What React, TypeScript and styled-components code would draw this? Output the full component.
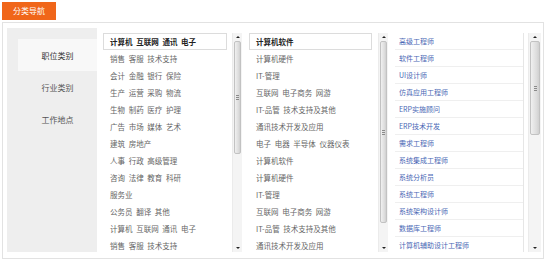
import styled, { createGlobalStyle } from "styled-components";

const Global = createGlobalStyle`
  html, body {
    margin: 0;
    padding: 0;
    background: #fff;
  }
`;

const Page = styled.div`
  padding: 2px;
  width: 543px;
  font-family: "Noto Sans CJK SC", "Noto Sans", sans-serif;
  font-size: 8px;
  color: #666;
`;

const Tab = styled.div`
  display: inline-block;
  height: 18px;
  line-height: 18px;
  padding: 0 11px;
  background: #f0661a;
  color: #fff;
  font-size: 8px;
  vertical-align: top;
`;

const Panel = styled.div`
  margin-top: 2px;
  border: 1px solid #e2e2e2;
  padding: 5px 0 6px 4px;
  width: 536px;
`;

const Inner = styled.div`
  display: flex;
  height: 224px;
`;

const Nav = styled.div`
  width: 90px;
  background: #eeeeee;
  padding-top: 11px;
  box-sizing: border-box;
`;

const NavItem = styled.div<{ active?: boolean }>`
  margin-left: 11px;
  height: 32px;
  display: flex;
  align-items: center;
  justify-content: center;
  font-size: 8px;
  color: ${(p) => (p.active ? "#333" : "#555")};
  background: ${(p) => (p.active ? "#f8f8f8" : "transparent")};
`;

const Column = styled.div<{ width: number; spacer: number }>`
  width: ${(p) => p.width}px;
  display: flex;
  padding: 5px ${(p) => p.spacer}px 0 0;
  box-sizing: border-box;
  background: #fff;
`;

const List = styled.div<{ padL: number; padR: number; divided?: boolean }>`
  flex: 1;
  overflow: hidden;
  padding: 0 ${(p) => p.padR}px 0 ${(p) => p.padL}px;
  border-right: ${(p) => (p.divided ? "1px solid #e6e6e6" : "none")};
  margin-right: ${(p) => (p.divided ? "4px" : "0")};
`;

const Row = styled.div<{ selected?: boolean }>`
  height: 17px;
  box-sizing: border-box;
  line-height: 15px;
  padding-left: 6px;
  font-size: 7.5px;
  border: 1px solid ${(p) => (p.selected ? "#dcdcdc" : "transparent")};
  background: ${(p) => (p.selected ? "#fff" : "transparent")};
  font-weight: ${(p) => (p.selected ? 700 : 400)};
  color: ${(p) => (p.selected ? "#222" : "#666")};
  white-space: nowrap;
  word-spacing: 2px;
`;

const LinkRow = styled.div`
  height: 17px;
  box-sizing: border-box;
  line-height: 16px;
  padding-left: 4px;
  font-size: 7px;
  border-bottom: 1px solid #efefef;
  color: #4a68b5;
  white-space: nowrap;
`;

const Bar = styled.div<{ width: number }>`
  width: ${(p) => p.width}px;
  height: 219px;
  display: flex;
  flex-direction: column;
  background: #f4f4f4;
  border-left: 1px solid #ebebeb;
  box-sizing: border-box;
`;

const Arrow = styled.div<{ down?: boolean }>`
  height: 8px;
  display: flex;
  align-items: center;
  justify-content: center;

  &::after {
    content: "";
    border-left: 2px solid transparent;
    border-right: 2px solid transparent;
    ${(p) =>
      p.down
        ? "border-top: 2px solid #222;"
        : "border-bottom: 2px solid #222;"}
  }
`;

const Track = styled.div`
  flex: 1;
  padding: 0 1px;
`;

const Thumb = styled.div<{ size: number }>`
  height: ${(p) => p.size}px;
  border: 1px solid #c2c2c2;
  border-radius: 2px;
  box-sizing: border-box;
  background: linear-gradient(to right, #f0f0f0, #dcdcdc 70%, #d0d0d0);
  display: flex;
  flex-direction: column;
  align-items: center;
  justify-content: center;
  gap: 1px;
`;

const Grip = styled.span`
  width: 3px;
  height: 1px;
  background: #8a8a8a;
`;

const ScrollBar = ({ width, thumb }: { width: number; thumb: number }) => (
  <Bar width={width}>
    <Arrow />
    <Track>
      <Thumb size={thumb}>
        <Grip />
        <Grip />
        <Grip />
      </Thumb>
    </Track>
    <Arrow down />
  </Bar>
);

const categories = [
  "计算机 互联网 通讯 电子",
  "销售 客服 技术支持",
  "会计 金融 银行 保险",
  "生产 运营 采购 物流",
  "生物 制药 医疗 护理",
  "广告 市场 媒体 艺术",
  "建筑 房地产",
  "人事 行政 高级管理",
  "咨询 法律 教育 科研",
  "服务业",
  "公务员 翻译 其他",
  "计算机 互联网 通讯 电子",
  "销售 客服 技术支持",
];

const subs = [
  "计算机软件",
  "计算机硬件",
  "IT-管理",
  "互联网 电子商务 网游",
  "IT-品管 技术支持及其他",
  "通讯技术开发及应用",
  "电子 电器 半导体 仪器仪表",
  "计算机软件",
  "计算机硬件",
  "IT-管理",
  "互联网 电子商务 网游",
  "IT-品管 技术支持及其他",
  "通讯技术开发及应用",
];

const jobs = [
  "高级工程师",
  "软件工程师",
  "UI设计师",
  "仿真应用工程师",
  "ERP实施顾问",
  "ERP技术开发",
  "需求工程师",
  "系统集成工程师",
  "系统分析员",
  "系统工程师",
  "系统架构设计师",
  "数据库工程师",
  "计算机辅助设计工程师",
];

export default function App() {
  return (
    <>
      <Global />
      <Page>
        <Tab>分类导航</Tab>
        <Panel>
          <Inner>
            <Nav>
              <NavItem active>职位类别</NavItem>
              <NavItem>行业类别</NavItem>
              <NavItem>工作地点</NavItem>
            </Nav>
            <Column width={146} spacer={1}>
              <List padL={6} padR={5}>
                {categories.map((c, i) => (
                  <Row key={i} selected={i === 0}>
                    {c}
                  </Row>
                ))}
              </List>
              <ScrollBar width={10} thumb={113} />
            </Column>
            <Column width={146} spacer={1}>
              <List padL={6} padR={6}>
                {subs.map((s, i) => (
                  <Row key={i} selected={i === 0}>
                    {s}
                  </Row>
                ))}
              </List>
              <ScrollBar width={10} thumb={182} />
            </Column>
            <Column width={154} spacer={2}>
              <List padL={6} padR={0} divided>
                {jobs.map((j, i) => (
                  <LinkRow key={i}>{j}</LinkRow>
                ))}
              </List>
              <ScrollBar width={13} thumb={94} />
            </Column>
          </Inner>
        </Panel>
      </Page>
    </>
  );
}
